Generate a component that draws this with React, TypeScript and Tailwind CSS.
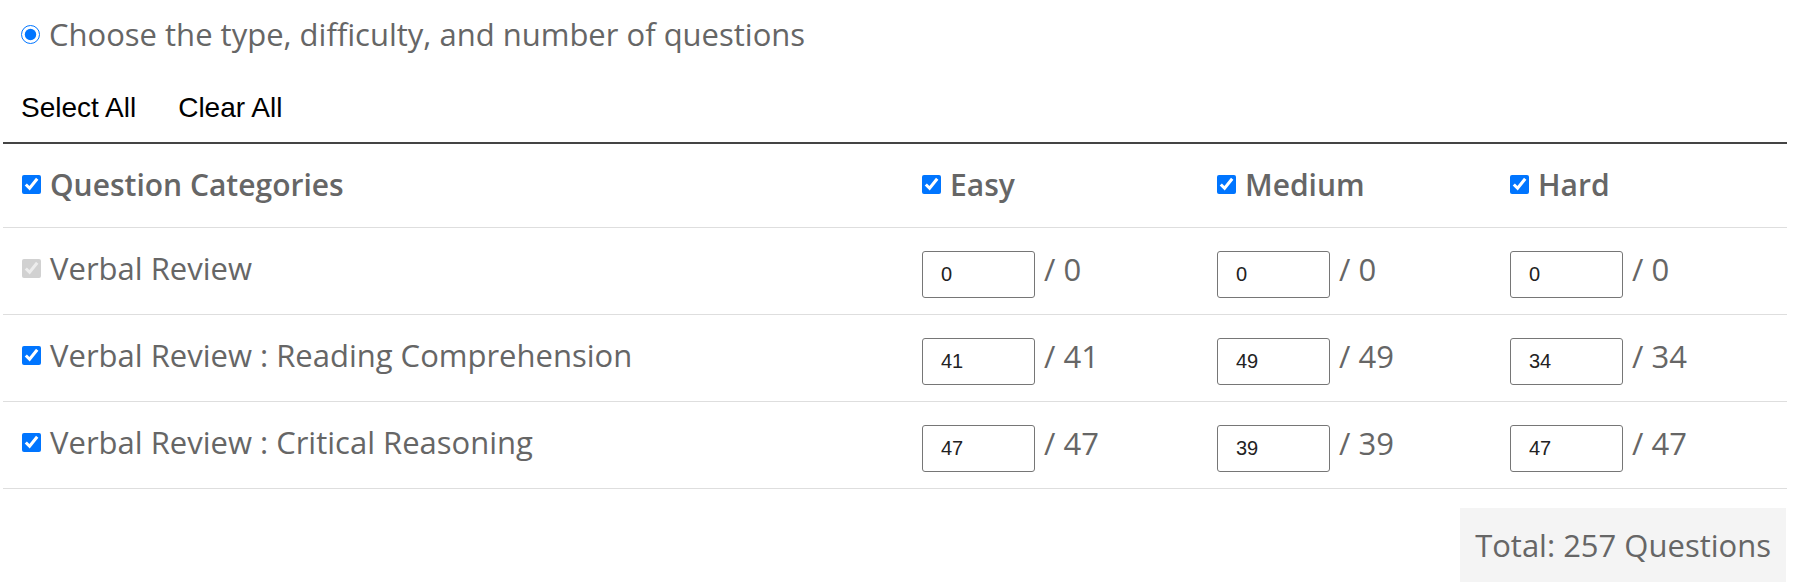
import React, { useState } from 'react';

type Row = {
  id: string;
  label: string;
  disabled?: boolean;
  easy: number;
  medium: number;
  hard: number;
};

const rows: Row[] = [
  { id: 'verbal', label: 'Verbal Review', disabled: true, easy: 0, medium: 0, hard: 0 },
  { id: 'rc', label: 'Verbal Review : Reading Comprehension', easy: 41, medium: 49, hard: 34 },
  { id: 'cr', label: 'Verbal Review : Critical Reasoning', easy: 47, medium: 39, hard: 47 },
];

const gridCols = 'grid grid-cols-[900px_295px_293px_296px]';

function CountCell({ value, max }: { value: number; max: number }) {
  return (
    <div className="flex items-baseline pl-[19px] pt-[8px]">
      <input
        type="text"
        defaultValue={value}
        className="w-[113px] h-[47px] border border-[#767676] rounded-[3px] pl-[18px] text-[20px] text-[#222] font-['Liberation_Sans',Arial,sans-serif] outline-none"
      />
      <span className="ml-[9px] text-[31px] text-[#666]">/ {max}</span>
    </div>
  );
}

export default function App() {
  const [mode] = useState('custom');

  return (
    <div className="bg-white w-[1803px] h-[585px] font-['Open_Sans',sans-serif] text-[#666]">
      <div className="ml-[3px] w-[1784px]">
        <div className="h-[68px] pt-[1px] flex items-center pl-[18px]">
          <input
            type="radio"
            checked={mode === 'custom'}
            readOnly
            className="m-0 w-[19px] h-[19px]"
          />
          <span className="ml-[9px] text-[31px]">Choose the type, difficulty, and number of questions</span>
        </div>

        <div className="h-[74px] pt-[5px] flex items-center pl-[18px] gap-[42px] text-[28px] text-black font-['Liberation_Sans',Arial,sans-serif]">
          <span>Select All</span>
          <span>Clear All</span>
        </div>

        <div className="border-t-2 border-[#444]">
          {/* header */}
          <div className={`${gridCols} h-[84px] pb-[2px] border-b border-[#dedede] items-center font-semibold text-[30px]`}>
            <label className="flex items-center pl-[19px] gap-[9px]">
              <input type="checkbox" defaultChecked className="m-0 w-[19px] h-[19px]" />
              Question Categories
            </label>
            <label className="flex items-center pl-[19px] gap-[9px]">
              <input type="checkbox" defaultChecked className="m-0 w-[19px] h-[19px]" />
              Easy
            </label>
            <label className="flex items-center pl-[19px] gap-[9px]">
              <input type="checkbox" defaultChecked className="m-0 w-[19px] h-[19px]" />
              Medium
            </label>
            <label className="flex items-center pl-[19px] gap-[9px]">
              <input type="checkbox" defaultChecked className="m-0 w-[19px] h-[19px]" />
              Hard
            </label>
          </div>

          {rows.map((r) => (
            <div key={r.id} className={`${gridCols} h-[87px] pb-[6px] border-b border-[#dedede] items-center`}>
              <label className="flex items-center pl-[19px] gap-[9px] text-[31px]">
                <input
                  type="checkbox"
                  defaultChecked
                  disabled={r.disabled}
                  className="m-0 w-[19px] h-[19px]"
                />
                {r.label}
              </label>
              <CountCell value={r.easy} max={r.easy} />
              <CountCell value={r.medium} max={r.medium} />
              <CountCell value={r.hard} max={r.hard} />
            </div>
          ))}
        </div>

        <div className="flex justify-end mt-[19px]">
          <div className="bg-[#f4f4f4] h-[74px] flex items-center px-[15px] mr-[1px] text-[31px]">
            Total: 257 Questions
          </div>
        </div>
      </div>
    </div>
  );
}
